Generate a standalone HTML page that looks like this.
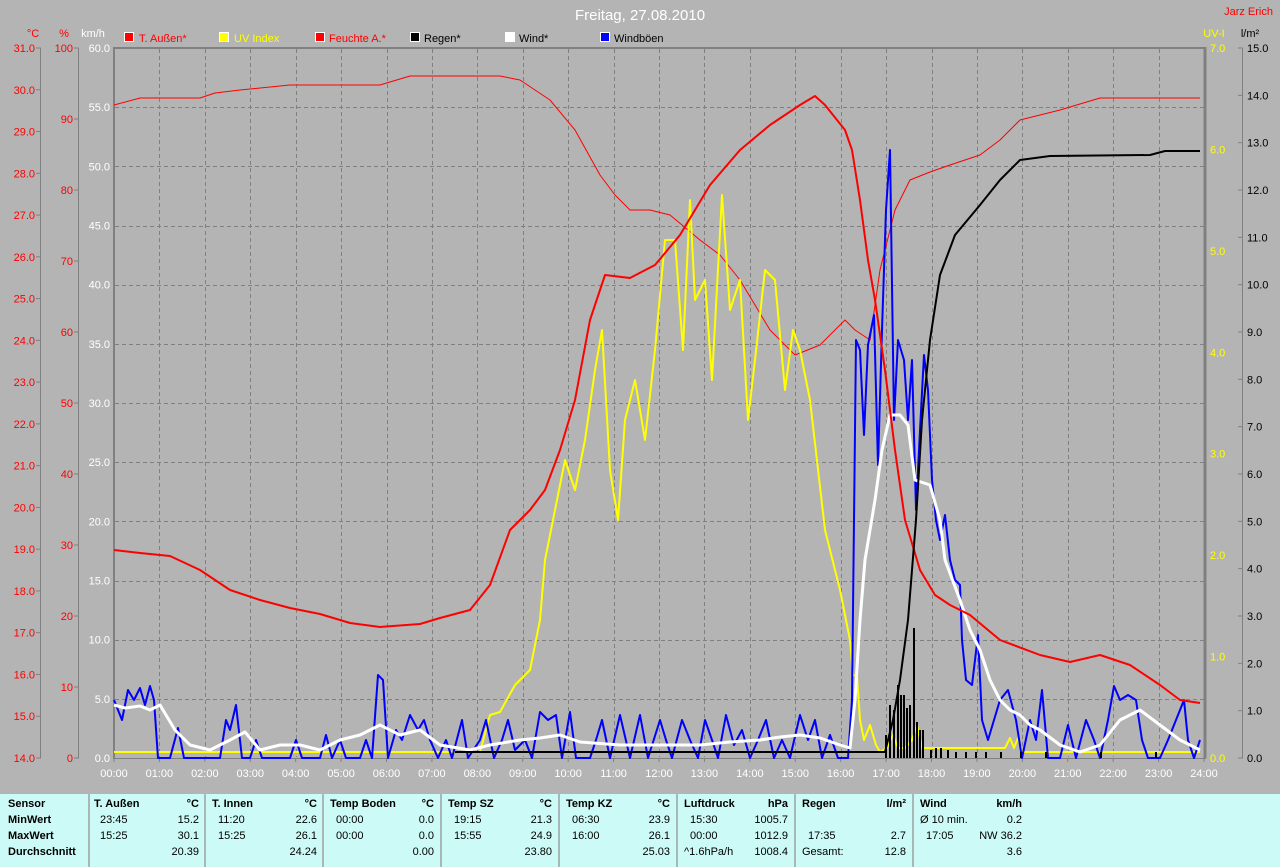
<!DOCTYPE html>
<html><head><meta charset="utf-8"><style>
html,body{margin:0;padding:0;background:#b4b4b4;}
body{width:1280px;height:867px;overflow:hidden;position:relative;font-family:"Liberation Sans",sans-serif;font-size:11px;}
.t{position:absolute;white-space:nowrap;}
.tb{position:absolute;left:0;top:794px;width:1280px;height:73px;background:#ccfaf6;}
.sep{position:absolute;top:794px;width:2px;height:73px;background:#a8b8b6;}
.b{font-weight:bold;}
.r{text-align:right;}
</style></head><body>
<svg width="1280" height="867" style="position:absolute;left:0;top:0" font-family="Liberation Sans, sans-serif" font-size="11">
<text x="640" y="20" fill="#fff" font-size="15" text-anchor="middle">Freitag, 27.08.2010</text>
<text x="1273" y="15" fill="#f00" text-anchor="end">Jarz Erich</text>
<!-- legend -->
<g font-size="11">
<rect x="124.5" y="32.5" width="9" height="9" fill="#f00" stroke="#fff"/><text x="139" y="42" fill="#f00">T. Außen*</text>
<rect x="219.5" y="32.5" width="9" height="9" fill="#ff0" stroke="#fff"/><text x="234" y="42" fill="#ff0">UV Index</text>
<rect x="315.5" y="32.5" width="9" height="9" fill="#f00" stroke="#fff"/><text x="329" y="42" fill="#f00">Feuchte A.*</text>
<rect x="410.5" y="32.5" width="9" height="9" fill="#000" stroke="#fff"/><text x="424" y="42" fill="#000">Regen*</text>
<rect x="505.5" y="32.5" width="9" height="9" fill="#fff" stroke="#fff"/><text x="519" y="42" fill="#000">Wind*</text>
<rect x="600.5" y="32.5" width="9" height="9" fill="#00f" stroke="#fff"/><text x="614" y="42" fill="#000">Windböen</text>
</g>
<text x="33" y="37" fill="#f00" text-anchor="middle">°C</text>
<text x="64" y="37" fill="#f00" text-anchor="middle">%</text>
<text x="93" y="37" fill="#fff" text-anchor="middle">km/h</text>
<text x="1214" y="37" fill="#ff0" text-anchor="middle">UV-I</text>
<text x="1250" y="37" fill="#000" text-anchor="middle">l/m²</text>
<!-- grid -->
<g stroke="#808080" stroke-dasharray="4,3" stroke-width="1" id="grid"></g>
<!-- axes -->
<g stroke="#808080">
<line x1="40.5" y1="48" x2="40.5" y2="758"/>
<line x1="78.5" y1="48" x2="78.5" y2="758"/>
<line x1="1242.5" y1="48" x2="1242.5" y2="758"/>
<line x1="113" y1="48" x2="1206" y2="48" stroke-width="2"/>
<line x1="114" y1="47" x2="114" y2="758" stroke-width="2"/>
<line x1="1205" y1="47" x2="1205" y2="758" stroke-width="3"/>
<line x1="113" y1="758.5" x2="1206" y2="758.5"/>
</g>
<g id="labels"></g>
<!-- data -->
<g fill="none" stroke-linejoin="round">
<polyline stroke="#f00" stroke-width="1" points="114,105 140,98 200,98 215,93 240,90 290,85 380,85 410,76 500,76 520,80 550,100 575,130 600,175 615,195 630,210 650,210 670,215 700,240 720,255 740,280 770,330 795,355 820,345 845,320 855,330 870,340 880,270 895,210 910,180 930,172 950,165 980,155 1000,140 1020,120 1060,110 1100,98 1200,98"/>
<polyline stroke="#ff0" stroke-width="2" points="114,752 480,752 490,715 500,712 515,685 530,670 540,620 545,560 555,510 565,460 575,490 585,440 595,370 602,330 610,470 618,520 625,420 635,380 645,440 655,350 665,240 675,240 683,350 690,200 695,300 705,280 712,380 722,195 730,310 740,280 748,420 755,360 765,270 775,280 785,390 793,330 800,350 810,400 825,530 840,590 850,640 853,675 857,676 860,720 864,740 870,725 876,745 880,752 887,748 893,735 898,748 905,748 912,740 917,725 922,748 935,748 1000,748 1005,748 1010,738 1014,748 1018,738 1022,752 1040,752 1200,752"/>
<polyline stroke="#00f" stroke-width="2" points="114,700 118,710 122,720 128,690 134,700 140,688 145,705 150,686 154,700 158,758 170,758 178,728 184,758 220,758 226,720 230,730 236,705 242,758 250,758 256,740 262,758 290,758 296,740 302,758 320,758 326,735 332,758 340,740 346,758 360,758 366,740 372,758 378,675 383,680 388,758 396,730 402,740 410,715 418,730 424,720 430,740 438,758 446,740 452,758 462,720 468,758 480,740 486,720 494,758 502,740 508,720 515,750 525,740 532,758 540,712 548,720 556,715 562,758 570,712 576,758 590,758 596,740 602,720 610,758 620,715 630,758 640,715 648,758 660,720 666,740 672,758 682,720 690,740 698,758 705,720 712,740 718,758 726,715 734,745 742,730 750,758 758,740 766,720 774,758 782,740 790,758 800,715 808,740 815,720 822,758 830,735 838,758 848,758 852,700 856,340 860,350 864,435 868,345 874,315 878,465 882,330 886,210 890,150 894,420 898,340 904,360 908,420 912,360 916,510 920,430 924,355 928,390 932,480 936,520 940,540 945,515 950,560 955,580 960,585 962,640 966,680 972,685 978,635 982,720 988,740 994,720 1000,700 1008,690 1016,720 1022,758 1030,720 1036,740 1042,690 1048,758 1060,758 1068,725 1076,758 1086,720 1094,740 1100,758 1108,720 1114,686 1120,700 1128,695 1136,700 1142,740 1148,758 1160,758 1168,740 1176,720 1184,700 1188,740 1194,758 1200,740"/>
<polyline stroke="#fff" stroke-width="3" points="114,705 125,708 140,706 150,710 160,705 175,730 190,745 210,750 230,740 245,732 260,750 280,745 300,745 320,750 340,740 360,735 380,725 400,735 420,730 440,745 470,750 490,745 520,740 540,738 560,735 580,742 620,745 660,745 700,745 730,742 760,740 780,737 800,735 820,738 840,745 850,748 855,700 860,620 865,560 875,500 882,450 890,415 900,415 908,425 915,480 930,485 940,520 945,560 960,600 970,630 980,650 990,680 1000,700 1010,710 1020,715 1030,725 1040,730 1060,745 1080,752 1100,745 1120,720 1140,710 1160,725 1180,740 1200,750"/>
<polyline stroke="#f00" stroke-width="2" points="114,550 140,553 170,556 200,570 230,590 260,600 290,608 320,614 350,623 380,627 420,624 440,618 470,610 490,585 510,530 530,510 545,490 560,450 575,400 590,320 605,275 630,278 655,265 680,235 710,185 740,150 770,125 800,105 815,96 825,105 845,130 852,150 860,200 868,260 875,300 885,370 895,450 905,520 920,570 935,595 950,605 970,615 1000,640 1040,655 1070,662 1100,655 1130,665 1160,685 1180,700 1200,703"/>
<polyline stroke="#000" stroke-width="2" points="455,752 885,752 893,720 900,680 908,620 916,520 922,420 930,340 940,275 955,235 980,205 1000,180 1020,160 1050,156 1150,155 1165,151 1200,151"/>
</g>
<g fill="#000" id="bars">
<rect x="885" y="735" width="2" height="23"/><rect x="889" y="705" width="2" height="53"/><rect x="893" y="710" width="2" height="48"/>
<rect x="897" y="685" width="2" height="73"/><rect x="900" y="695" width="2" height="63"/><rect x="903" y="695" width="2" height="63"/>
<rect x="906" y="708" width="2" height="50"/><rect x="909" y="705" width="2" height="53"/><rect x="913" y="628" width="2" height="130"/>
<rect x="916" y="722" width="2" height="36"/><rect x="919" y="730" width="2" height="28"/><rect x="922" y="730" width="2" height="28"/>
<rect x="930" y="750" width="2" height="8"/><rect x="935" y="748" width="2" height="10"/><rect x="940" y="748" width="2" height="10"/><rect x="947" y="750" width="2" height="8"/>
<rect x="955" y="752" width="2" height="6"/><rect x="965" y="752" width="2" height="6"/><rect x="975" y="752" width="2" height="6"/><rect x="985" y="752" width="2" height="6"/><rect x="1000" y="752" width="2" height="6"/><rect x="1020" y="752" width="2" height="6"/><rect x="1045" y="752" width="2" height="6"/><rect x="1100" y="752" width="2" height="6"/><rect x="1155" y="752" width="2" height="6"/>
</g>
</svg>
<div class="tb"></div>
<div class="sep" style="left:88px"></div><div class="sep" style="left:204px"></div><div class="sep" style="left:322px"></div><div class="sep" style="left:440px"></div><div class="sep" style="left:558px"></div><div class="sep" style="left:676px"></div><div class="sep" style="left:794px"></div><div class="sep" style="left:912px"></div>
<div id="tbl"></div>
<script>
var s=document.querySelector('svg'),NS='http://www.w3.org/2000/svg';
function el(t,a,txt,p){var e=document.createElementNS(NS,t);for(var k in a)e.setAttribute(k,a[k]);if(txt!=null)e.textContent=txt;(p||s).appendChild(e);return e;}
var g=document.getElementById('grid'),L=document.getElementById('labels');
var x0=114,x1=1204,y0=48,y1=758;
for(var h=1;h<24;h++){var x=Math.round(x0+(x1-x0)*h/24)+.5;el('line',{x1:x,y1:49,x2:x,y2:757},null,g);}
for(var i=1;i<12;i++){var y=Math.round(y0+(y1-y0)*i/12)+.5;el('line',{x1:115,y1:y,x2:1204,y2:y},null,g);}
for(var h=0;h<=24;h++){var x=x0+(x1-x0)*h/24;el('text',{x:x,y:777,fill:'#fff','text-anchor':'middle'},(h<10?'0':'')+h+':00',L);el('line',{x1:x,y1:758,x2:x,y2:762,stroke:'#808080'},null,L);}
for(var v=0;v<=12;v++){var y=y1-(y1-y0)*v/12;el('text',{x:110,y:y+4,fill:'#fff','text-anchor':'end'},(v*5).toFixed(1),L);}
for(var v=14;v<=31;v++){var y=y1-(y1-y0)*(v-14)/17;el('text',{x:35,y:y+4,fill:'#f00','text-anchor':'end'},v.toFixed(1),L);el('line',{x1:36,y1:y,x2:41,y2:y,stroke:'#808080'},null,L);}
for(var v=0;v<=10;v++){var y=y1-(y1-y0)*v/10;el('text',{x:73,y:y+4,fill:'#f00','text-anchor':'end'},v*10,L);el('line',{x1:74,y1:y,x2:79,y2:y,stroke:'#808080'},null,L);}
for(var v=0;v<=7;v++){var y=y1-(y1-y0)*v/7;el('text',{x:1210,y:y+4,fill:'#ff0'},v.toFixed(1),L);}
for(var v=0;v<=15;v++){var y=y1-(y1-y0)*v/15;el('text',{x:1247,y:y+4,fill:'#000'},v.toFixed(1),L);el('line',{x1:1238,y1:y,x2:1243,y2:y,stroke:'#808080'},null,L);}
var T=document.getElementById('tbl');
function t(x,y,txt,cls,al){var d=document.createElement('div');d.className='t '+(cls||'');d.style.top=(y-10)+'px';if(al){d.style.right=(1280-x)+'px';}else d.style.left=x+'px';d.textContent=txt;T.appendChild(d);}
var rows=[808,824,840,856];
t(8,rows[0],'Sensor','b');t(8,rows[1],'MinWert','b');t(8,rows[2],'MaxWert','b');t(8,rows[3],'Durchschnitt','b');
var cols=[[94,199,'T. Außen','°C',['23:45','15.2'],['15:25','30.1'],['','20.39']],
[212,317,'T. Innen','°C',['11:20','22.6'],['15:25','26.1'],['','24.24']],
[330,434,'Temp Boden','°C',['00:00','0.0'],['00:00','0.0'],['','0.00']],
[448,552,'Temp SZ','°C',['19:15','21.3'],['15:55','24.9'],['','23.80']],
[566,670,'Temp KZ','°C',['06:30','23.9'],['16:00','26.1'],['','25.03']],
[684,788,'Luftdruck','hPa',['15:30','1005.7'],['00:00','1012.9'],['^1.6hPa/h','1008.4']],
[802,906,'Regen','l/m²',['',''],['17:35','2.7'],['Gesamt:','12.8']],
[920,1022,'Wind','km/h',['Ø 10 min.','0.2'],['17:05','NW 36.2'],['','3.6']]];
cols.forEach(function(c){t(c[0],rows[0],c[2],'b');t(c[1],rows[0],c[3],'b',1);
for(var r=0;r<3;r++){var v=c[4+r];var ind=(v[0]=='^1.6hPa/h'||v[0]=='Gesamt:'||v[0]=='Ø 10 min.')?0:6;if(v[0])t(c[0]+ind,rows[r+1],v[0]);if(v[1])t(c[1],rows[r+1],v[1],'',1);}});
</script>
</body></html>
